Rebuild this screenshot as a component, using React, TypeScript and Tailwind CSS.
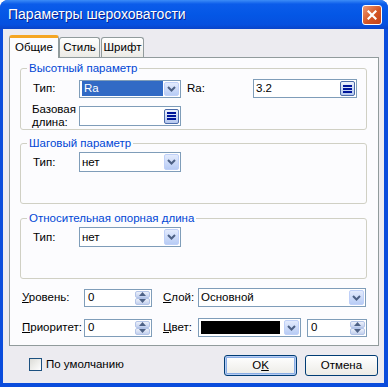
import React from 'react'

function Chevron() {
  return (
    <svg width="9" height="6" viewBox="0 0 9 6">
      <path d="M1 1l3.5 3.5L8 1" fill="none" stroke="#4D6185" strokeWidth="2" />
    </svg>
  )
}

function DropButton() {
  return (
    <div className="my-px mr-px flex w-[15px] items-center justify-center rounded-[2px] border border-[#BFD0F8] bg-[linear-gradient(to_bottom,#E3EBFD,#B8CCF5)]">
      <Chevron />
    </div>
  )
}

function BrowseButton() {
  return (
    <div className="mr-px flex h-[15px] w-[15px] flex-col items-center justify-center gap-px rounded-[2px] border border-[#4C6CAA] bg-[linear-gradient(to_bottom,#EEF2FC,#B4C7EE)]">
      <span className="h-[2px] w-[9px] bg-[#00169A]" />
      <span className="h-[2px] w-[9px] bg-[#00169A]" />
      <span className="h-[2px] w-[9px] bg-[#00169A]" />
    </div>
  )
}

function SpinArrow({ up }: { up?: boolean }) {
  return (
    <div className="flex flex-1 items-center justify-center rounded-[2px] border border-[#B3C4E8] bg-[linear-gradient(to_bottom,#EDF1FA,#C2D0EE)]">
      <svg width="7" height="4" viewBox="0 0 7 4">
        <path d={up ? 'M0 4L3.5 0L7 4Z' : 'M0 0L3.5 4L7 0Z'} fill="#4D6185" />
      </svg>
    </div>
  )
}

function Combo({ className, children }: { className: string; children?: React.ReactNode }) {
  return (
    <div className={`flex border border-[#7F9DB9] bg-white ${className}`}>
      <div className="flex min-w-0 flex-1 items-center pl-[2px]">{children}</div>
      <DropButton />
    </div>
  )
}

function BrowseInput({ className, value }: { className: string; value?: string }) {
  return (
    <div className={`flex items-center border border-[#7F9DB9] bg-white ${className}`}>
      <div className="flex-1 pl-[2px]">{value}</div>
      <BrowseButton />
    </div>
  )
}

function Spin({ className, value }: { className: string; value: string }) {
  return (
    <div className={`flex border border-[#7F9DB9] bg-white ${className}`}>
      <div className="flex flex-1 items-center pl-[3px]">{value}</div>
      <div className="my-px mr-px flex w-[15px] flex-col">
        <SpinArrow up />
        <SpinArrow />
      </div>
    </div>
  )
}

function Group({ title, className, children }: { title: string; className: string; children: React.ReactNode }) {
  return (
    <fieldset className={`ml-[10px] w-[347px] rounded-[3px] border border-[#D0D0C4] ${className}`}>
      <legend className="ml-[6px] px-[2px] text-[#0046D5]">{title}</legend>
      {children}
    </fieldset>
  )
}

function Tab({ label, active }: { label: string; active?: boolean }) {
  if (active) {
    return (
      <div className="relative z-10 -mb-px flex h-[23px] w-[50px] items-center justify-center rounded-t-[3px] border-x border-t-[3px] border-x-[#919B9C] border-t-[#F5A623] bg-[#FCFCFE] pb-[2px]">
        {label}
      </div>
    )
  }
  return (
    <div className="flex h-[20px] items-center justify-center rounded-t-[3px] border-x border-t border-[#919B9C] bg-[linear-gradient(to_bottom,#FFFFFF,#ECEBE6)] px-[4px]">
      {label}
    </div>
  )
}

export default function App() {
  return (
    <div className="h-[387px] w-[388px] bg-white font-['Liberation_Sans',Arial,sans-serif] text-[11.5px] leading-[13px] text-black">
      <div className="flex h-full w-full flex-col overflow-hidden rounded-t-[8px] bg-[#0A4CDC]">
        {/* title bar */}
        <div className="flex h-[29px] shrink-0 items-center bg-[linear-gradient(to_bottom,#3C8CF7_0%,#0B5CEA_14%,#0457E6_50%,#0650DF_85%,#0A44C9_100%)] pl-[8px] pr-[6px]">
          <span className="text-[14px] text-white [text-shadow:1px_1px_0_#0A1E8C]">
            Параметры шероховатости
          </span>
          <div className="ml-auto flex h-[20px] w-[20px] items-center justify-center rounded-[3px] border border-white bg-[linear-gradient(135deg,#EE9A76,#D45524_55%,#C4431A)]">
            <svg width="10" height="10" viewBox="0 0 10 10">
              <path d="M1.5 1.5l7 7M8.5 1.5l-7 7" stroke="white" strokeWidth="2.2" strokeLinecap="square" />
            </svg>
          </div>
        </div>

        {/* client area */}
        <div className="mb-[4px] ml-[3px] mr-[4px] flex flex-1 flex-col bg-[#ECEBF0] pl-[6px] pt-[6px]">
          <div className="flex h-[22px] items-end">
            <Tab label="Общие" active />
            <div className="w-[41px]">
              <Tab label="Стиль" />
            </div>
            <div className="ml-px w-[43px]">
              <Tab label="Шрифт" />
            </div>
          </div>

          <div className="h-[289px] w-[370px] border border-[#919B9C] bg-[#FCFCFE]">
            <Group title="Высотный параметр" className="mt-[4px] h-[68px]">
              <div className="flex items-center pt-[4px]">
                <span className="w-[58px] pl-[12px]">Тип:</span>
                <Combo className="h-[18px] w-[102px]">
                  <div className="mr-px h-[15px] flex-1 bg-[#316AC5] pl-[2px] leading-[15px] text-white">Ra</div>
                </Combo>
                <span className="w-[72px] pl-[6px]">Ra:</span>
                <BrowseInput className="h-[19px] w-[104px]" value="3.2" />
              </div>
              <div className="mt-[5px] flex items-center">
                <span className="w-[58px] pl-[11px]">
                  Базовая
                  <br />
                  длина:
                </span>
                <BrowseInput className="h-[20px] w-[102px]" />
              </div>
            </Group>

            <Group title="Шаговый параметр" className="mt-[7px] h-[67px]">
              <div className="flex items-center pt-[2px]">
                <span className="w-[58px] pl-[12px]">Тип:</span>
                <Combo className="h-[20px] w-[102px]">нет</Combo>
              </div>
            </Group>

            <Group title="Относительная опорная длина" className="mt-[8px] h-[67px]">
              <div className="flex items-center pt-[2px]">
                <span className="w-[58px] pl-[12px]">Тип:</span>
                <Combo className="h-[20px] w-[102px]">нет</Combo>
              </div>
            </Group>

            <div className="mt-[9px] flex items-center">
              <span className="w-[74px] pl-[12px]">
                <u>У</u>ровень:
              </span>
              <Spin className="h-[18px] w-[68px]" value="0" />
              <span className="ml-[11px] w-[35px]">
                <u>С</u>лой:
              </span>
              <Combo className="h-[19px] w-[168px]">Основной</Combo>
            </div>
            <div className="mt-[11px] flex items-center">
              <span className="w-[74px] pl-[12px]">
                <u>П</u>риоритет:
              </span>
              <Spin className="h-[18px] w-[68px]" value="0" />
              <span className="ml-[11px] w-[35px]">
                <u>Ц</u>вет:
              </span>
              <Combo className="h-[19px] w-[103px]">
                <div className="mr-[4px] h-[13px] flex-1 bg-black" />
              </Combo>
              <Spin className="ml-[6px] h-[18px] w-[60px]" value="0" />
            </div>
          </div>

          {/* footer */}
          <div className="flex h-[37px] items-center pl-[20px] pr-[6px]">
            <div className="flex items-center gap-[4px]">
              <div className="h-[13px] w-[13px] border border-[#1C5180] bg-[linear-gradient(135deg,#DCDCD7,#FFFFFF)]" />
              <span>По умолчанию</span>
            </div>
            <div className="ml-auto mt-[2px] flex gap-[8px]">
              <button className="flex h-[21px] w-[73px] items-center justify-center rounded-[3px] border border-[#003C74] bg-[linear-gradient(to_bottom,#FFFFFF,#ECEBE6)] shadow-[inset_0_0_0_1px_#B6CCF4,inset_0_0_0_2px_#89ADE4]">
                O<u>K</u>
              </button>
              <button className="flex h-[21px] w-[73px] items-center justify-center rounded-[3px] border border-[#003C74] bg-[linear-gradient(to_bottom,#FFFFFF,#ECEBE6)]">
                Отмена
              </button>
            </div>
          </div>
        </div>
      </div>
    </div>
  )
}
